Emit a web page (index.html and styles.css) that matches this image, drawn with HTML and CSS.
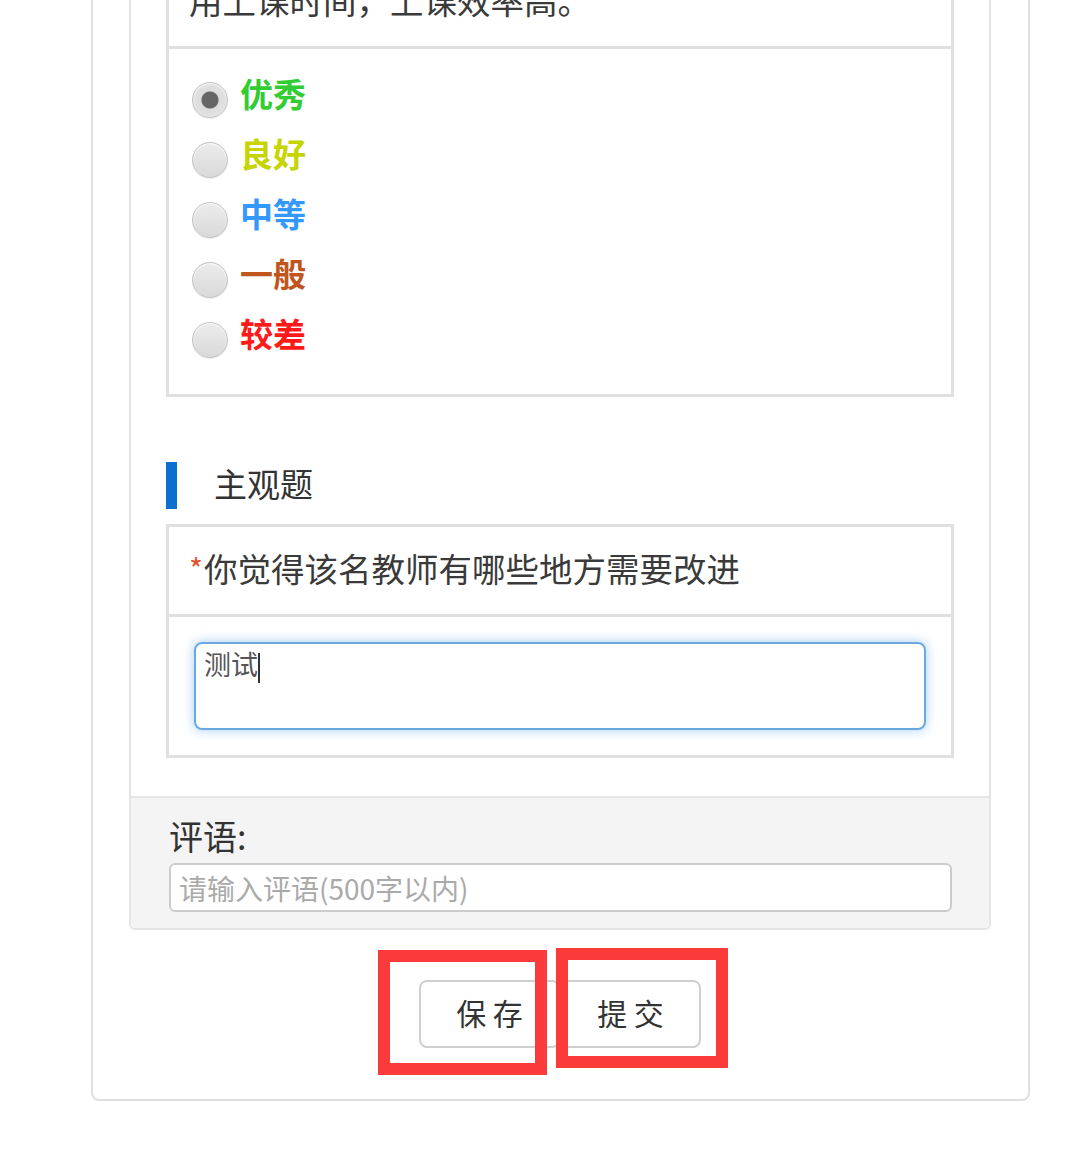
FILE: index.html
```html
<!DOCTYPE html>
<html lang="zh-CN">
<head>
  <meta charset="UTF-8" />
  <meta name="viewport" content="width=device-width, initial-scale=1.0" />
  <title>教师评价</title>
  <link rel="stylesheet" href="styles.css">
</head>
<body>

  <div class="card">
    <div class="panel">
      <div class="panel-body">

        <!-- 客观题 -->
        <div class="question">
          <div class="question-title">用上课时间，上课效率高。</div>
          <div class="options">
            <label class="option"><input type="radio" name="q1" checked><span class="lv-1">优秀</span></label>
            <label class="option"><input type="radio" name="q1"><span class="lv-2">良好</span></label>
            <label class="option"><input type="radio" name="q1"><span class="lv-3">中等</span></label>
            <label class="option"><input type="radio" name="q1"><span class="lv-4">一般</span></label>
            <label class="option"><input type="radio" name="q1"><span class="lv-5">较差</span></label>
          </div>
        </div>

        <!-- 主观题 -->
        <div class="section-title">
          <span class="bar"></span>
          <h3>主观题</h3>
        </div>
        <div class="question">
          <div class="question-title"><span class="required">*</span>你觉得该名教师有哪些地方需要改进</div>
          <div class="answer">
            <div class="answer-input">测试<span class="caret"></span></div>
          </div>
        </div>

      </div>

      <div class="panel-footer">
        <label class="comment-label">评语:</label>
        <input type="text" class="comment-input" placeholder="请输入评语(500字以内)">
      </div>
    </div>

    <div class="actions">
      <div class="btn-wrap">
        <button class="btn">保 存</button>
        <span class="mark mark-save"></span>
      </div>
      <div class="btn-wrap">
        <button class="btn">提 交</button>
        <span class="mark mark-submit"></span>
      </div>
    </div>
  </div>

</body>
</html>
```

FILE: styles.css
```css
body {
  margin: 0;
  background-color: #fff;
  font-family: "Noto Sans CJK SC", "Noto Sans", sans-serif;
  color: #333;
}

.card {
  margin: -44px 48px 0 91px;
  padding: 0 37px 51px 36px;
  border: 2px solid #e0e0e0;
  border-top: none;
  border-radius: 0 0 8px 8px;
  background-color: #fff;
}

.panel {
  border: 2px solid #e4e4e4;
  border-top: none;
  border-radius: 0 0 6px 6px;
  overflow: hidden;
}

.panel-body {
  padding: 0 35px 38px 35px;
  background-color: #fff;
}

.question {
  border: 3px solid #e0e0e0;
}

.question-title {
  height: 90px;
  box-sizing: border-box;
  display: flex;
  align-items: center;
  padding: 0 0 6px 20px;
  font-size: 33.5px;
  color: #3a3a3a;
  border-bottom: 3px solid #e0e0e0;
  white-space: nowrap;
}

.required {
  color: #e0522e;
  font-size: 30px;
  margin-right: 1px;
}

.options {
  padding: 21px 0 24px 23px;
}

.option {
  height: 60px;
  display: flex;
  align-items: center;
  gap: 12px;
  font-size: 33px;
  font-weight: bold;
  cursor: pointer;
}

.option span {
  margin-bottom: 14px;
}

.option input {
  appearance: none;
  -webkit-appearance: none;
  width: 36px;
  height: 36px;
  margin: 0;
  border-radius: 50%;
  border: 1px solid #c2c2c2;
  background: linear-gradient(#ececec, #d9d9d9);
  box-shadow: inset 0 1px 2px rgba(255,255,255,0.8), 0 1px 1px rgba(0,0,0,0.08);
}

.option input:checked {
  background: radial-gradient(circle, #666 0, #666 8px, #dcdcdc 9px, #e8e8e8 100%);
}

.lv-1 { color: #33cc33; }
.lv-2 { color: #c6d400; }
.lv-3 { color: #3399ff; }
.lv-4 { color: #c0561e; }
.lv-5 { color: #ff1a1a; }

.section-title {
  display: flex;
  align-items: center;
  margin: 65px 0 15px;
  height: 47px;
}

.section-title .bar {
  width: 11px;
  height: 47px;
  background-color: #0a6fcf;
}

.section-title h3 {
  margin: 0 0 6px 37px;
  font-size: 33px;
  font-weight: normal;
  color: #333;
}

.answer {
  padding: 25px;
}

.answer-input {
  height: 88px;
  box-sizing: border-box;
  padding: 0 8px;
  border: 2px solid #6aa8e0;
  border-radius: 8px;
  box-shadow: 0 0 12px rgba(102,175,233,0.6);
  font-size: 27px;
  color: #555;
  line-height: 40px;
}

.caret {
  display: inline-block;
  width: 2px;
  height: 30px;
  background-color: #333;
  vertical-align: middle;
}

.panel-footer {
  background-color: #f4f4f4;
  border-top: 2px solid #e6e6e6;
  padding: 18px 37px 16px 38px;
}

.comment-label {
  display: block;
  font-size: 34px;
  line-height: 40px;
  color: #333;
  margin-bottom: 7px;
}

.comment-input {
  display: block;
  width: 100%;
  height: 49px;
  box-sizing: border-box;
  padding: 0 8px;
  border: 2px solid #ccc;
  border-radius: 6px;
  background-color: #fff;
  font-family: "Noto Sans CJK SC", sans-serif;
  font-size: 28px;
  color: #333;
}

.comment-input::placeholder {
  color: #aaa;
}

.actions {
  display: flex;
  justify-content: center;
  padding-top: 50px;
}

.btn-wrap {
  position: relative;
}

.btn {
  width: 141px;
  height: 68px;
  padding: 0 0 4px;
  border: 2px solid #cfcfcf;
  border-radius: 8px;
  background-color: #fff;
  font-family: "Noto Sans CJK SC", sans-serif;
  font-size: 30px;
  color: #333;
  cursor: pointer;
}

/* 红色标注框 */
.mark {
  position: absolute;
  border: 12px solid #fb3a3a;
  box-sizing: border-box;
}

.mark-save {
  left: -41px;
  top: -30px;
  width: 169px;
  height: 125px;
}

.mark-submit {
  left: -4px;
  top: -32px;
  width: 172px;
  height: 120px;
}
```
